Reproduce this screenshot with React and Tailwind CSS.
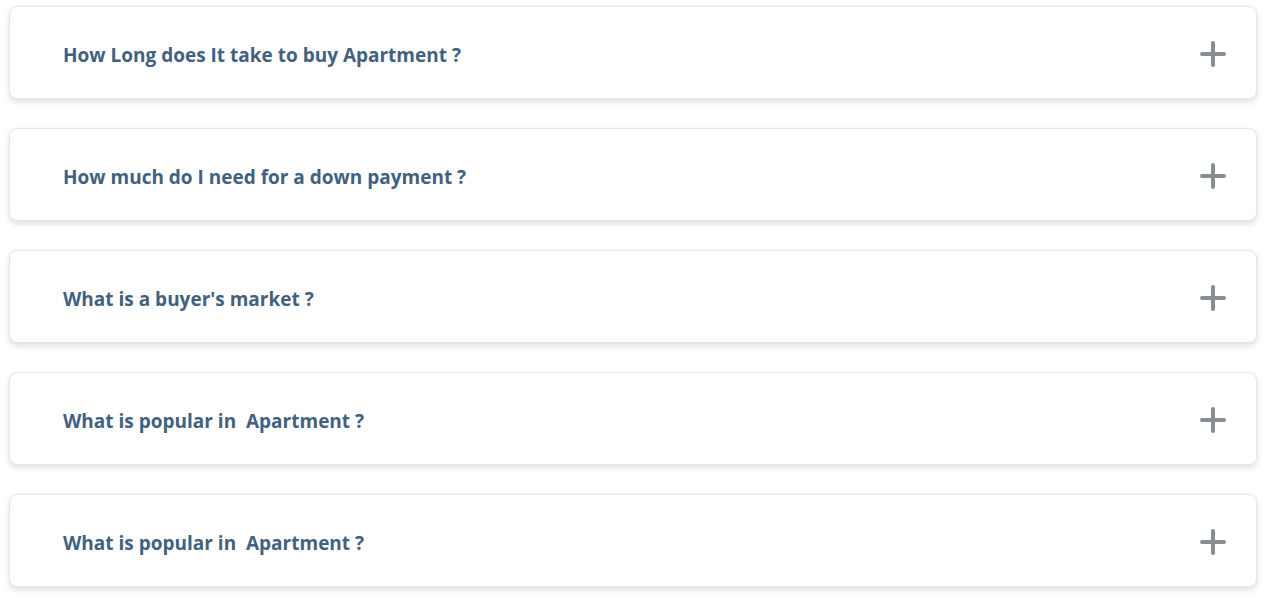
import React from 'react';

const questions = [
  'How Long does It take to buy Apartment ?',
  'How much do I need for a down payment ?',
  "What is a buyer's market ?",
  'What is popular in  Apartment ?',
  'What is popular in  Apartment ?',
];

const PlusIcon = () => (
  <svg width="28" height="28" viewBox="0 0 28 28" fill="none">
    <path d="M14 3v22M3 14h22" stroke="#878e92" strokeWidth="4" strokeLinecap="round" />
  </svg>
);

const Faq = () => {
  return (
    <div className="min-h-screen bg-white pl-[9px] pr-[11px] pt-[6px]" style={{ fontFamily: '"Open Sans", "Noto Sans", sans-serif' }}>
      <div className="flex flex-col gap-[29px]">
        {questions.map((q, i) => (
          <div
            key={i}
            className="flex items-center justify-between h-[93px] pl-[53px] pr-[29px] pt-[2px] bg-white border border-[#e6e6e6] rounded-lg shadow-[0_3px_6px_rgba(0,0,0,0.13)]"
          >
            <h3 className="pt-[3px] text-[19px] font-bold text-[#42617e] whitespace-pre">{q}</h3>
            <PlusIcon />
          </div>
        ))}
      </div>
    </div>
  );
};

export default Faq;
